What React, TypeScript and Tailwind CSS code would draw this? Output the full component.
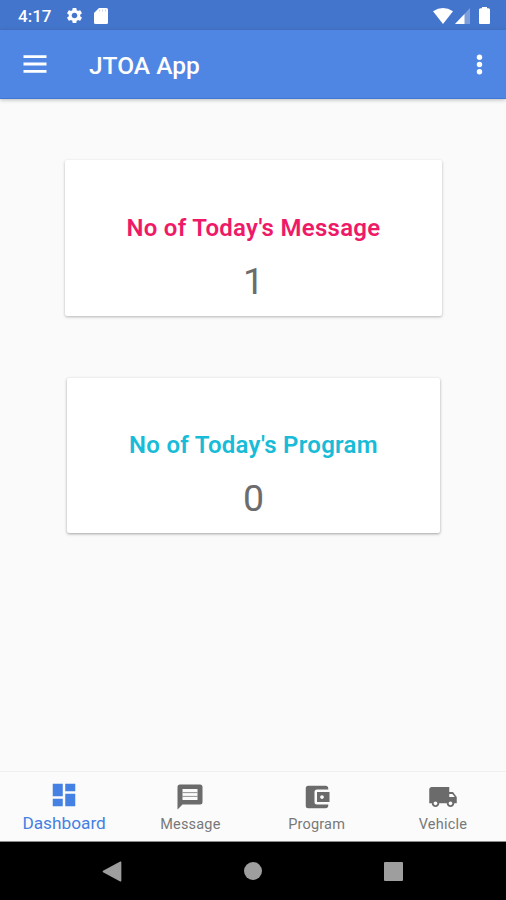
import React, { useState } from 'react'
import {
  MdAccountBalanceWallet,
  MdDashboard,
  MdLocalShipping,
  MdSettings,
} from 'react-icons/md'

interface StatCardProps {
  title: string
  count: number
  className: string
  titleClassName: string
}

const MessageIcon: React.FC<{ size?: number }> = ({ size = 24 }) => (
  <svg width={size} height={size} viewBox="0 0 24 24">
    <path d="M20 2H4a2 2 0 0 0-2 2v18l4-4h14a2 2 0 0 0 2-2V4a2 2 0 0 0-2-2z" fill="currentColor" />
    <path d="M6 5.6h12v8.8H6z" fill="#fbfbfb" />
    <path d="M6 8.5h12M6 11.5h12" stroke="currentColor" strokeWidth=".6" />
  </svg>
)

const tabs = [
  { label: 'Dashboard', icon: MdDashboard },
  { label: 'Message', icon: MessageIcon },
  { label: 'Program', icon: MdAccountBalanceWallet },
  { label: 'Vehicle', icon: MdLocalShipping },
]

const StatusBar: React.FC = () => (
  <div className="flex h-[30px] shrink-0 items-center justify-between bg-[#4475cc] pr-[16px] pl-[18px] text-white">
    <div className="flex items-center">
      <span className="w-[47px] pt-[2px] text-[17px] leading-[28px] font-medium whitespace-nowrap">4:17</span>
      <MdSettings size={19} className="mt-px" />
      <svg width="14" height="16" viewBox="0 0 14 16" className="mt-px ml-[10px]">
        <path d="M5 0h7.5Q14 0 14 1.5v13q0 1.5-1.5 1.5h-11Q0 16 0 14.5V5z" fill="currentColor" />
        <path d="M5.5 1.5v2M8.5 1.5v2M11.5 1.5v2" stroke="#4475cc" strokeWidth="1" opacity=".3" />
      </svg>
    </div>
    <div className="flex items-center pt-px">
      <svg width="20" height="16" viewBox="0 0 20 16">
        <path d="M0 3.2Q10-3.2 20 3.2L10 16z" fill="currentColor" />
      </svg>
      <svg width="15" height="16" viewBox="0 0 15 16" className="ml-[2px]">
        <path d="M15 0v16H0z" fill="currentColor" opacity=".3" />
        <path d="M9.5 5.9V16H0z" fill="currentColor" />
      </svg>
      <svg width="11" height="17" viewBox="0 0 11 17" className="ml-[9px]">
        <path d="M3 0h5v1.2h1.5q1.5 0 1.5 1.5V16q0 1-1 1H1q-1 0-1-1V2.7q0-1.5 1.5-1.5H3z" fill="currentColor" />
      </svg>
    </div>
  </div>
)

const AppBar: React.FC = () => (
  <header className="flex h-[69px] shrink-0 items-center border-b border-[#3f77d3] bg-[#4f86e4] pr-[23px] pl-[23px] text-white shadow-[0_1px_4px_rgba(0,0,0,0.25)]">
    <button aria-label="Menu">
      <svg width="24" height="18" viewBox="0 0 24 18" className="block">
        <path d="M.5 1.7h23M.5 9h23M.5 16.3h23" stroke="currentColor" strokeWidth="2.8" />
      </svg>
    </button>
    <h1 className="ml-[42px] flex-1 pt-[3px] text-[24.5px] leading-[32px] font-medium">JTOA App</h1>
    <button aria-label="More options">
      <svg width="7" height="22" viewBox="0 0 7 22" className="mt-px block">
        <circle cx="3.5" cy="3.2" r="2.7" fill="currentColor" />
        <circle cx="3.5" cy="10.5" r="2.7" fill="currentColor" />
        <circle cx="3.5" cy="17.8" r="2.7" fill="currentColor" />
      </svg>
    </button>
  </header>
)

const StatCard: React.FC<StatCardProps> = ({ title, count, className, titleClassName }) => (
  <section
    className={`flex flex-col items-center rounded-[2px] bg-white ${className}`}
  >
    <h2 className={`pl-px text-[24px] leading-[32px] font-semibold tracking-[0.28px] whitespace-nowrap ${titleClassName}`}>
      {title}
    </h2>
    <p className="mt-[15px] pl-px text-[37.5px] leading-[44px] text-[#6c6c6c]">{count}</p>
  </section>
)

const BottomTabs: React.FC = () => {
  const [active, setActive] = useState('Dashboard')

  return (
    <nav className="grid h-[71px] shrink-0 grid-cols-4 border-t border-b border-t-[#f0f0f0] border-b-[#8c8c8c] bg-[#fbfbfb] pl-px">
      {tabs.map(({ label, icon: Icon }) => {
        const isActive = active === label
        return (
          <button
            key={label}
            onClick={() => setActive(label)}
            className={`flex flex-col items-center ${isActive ? 'pt-[8px] text-[#4580e3]' : 'pt-[10px] text-[#6b6b6b]'}`}
          >
            <Icon size={30} />
            <span
              className={
                isActive
                  ? 'mt-[2px] text-[17.25px] leading-[22px]'
                  : 'mt-[4px] text-[14.5px] leading-[18px] tracking-[0.2px] text-[#787878]'
              }
            >
              {label}
            </span>
          </button>
        )
      })}
    </nav>
  )
}

const SystemNav: React.FC = () => (
  <div className="flex h-[58px] shrink-0 items-center justify-between bg-black pr-[103px] pl-[102px] text-[#9e9e9e]">
    <svg width="20" height="21" viewBox="0 0 20 21">
      <path d="M18.6 1.2v18.6L1.4 10.5z" fill="currentColor" stroke="currentColor" strokeWidth="1.5" strokeLinejoin="round" />
    </svg>
    <div className="h-[18px] w-[18px] rounded-full bg-[#9e9e9e]" />
    <div className="h-[19px] w-[19px] rounded-[1px] bg-[#9e9e9e]" />
  </div>
)

export default function App() {
  return (
    <div className="flex h-[900px] w-[506px] flex-col overflow-hidden bg-[#fafafa] font-[Roboto,sans-serif]">
      <StatusBar />
      <AppBar />
      <main className="flex flex-1 flex-col items-center pt-[61px]">
        <StatCard
          title="No of Today's Message"
          count={1}
          className="h-[156px] w-[377px] pt-[52px] shadow-[0_1px_3px_rgba(0,0,0,0.28)]"
          titleClassName="text-[#ee1a68]"
        />
        <StatCard
          title="No of Today's Program"
          count={0}
          className="mt-[62px] h-[155px] w-[373px] pt-[51px] shadow-[0_1px_3px_rgba(0,0,0,0.36)]"
          titleClassName="text-[#18bcd8]"
        />
      </main>
      <BottomTabs />
      <SystemNav />
    </div>
  )
}
